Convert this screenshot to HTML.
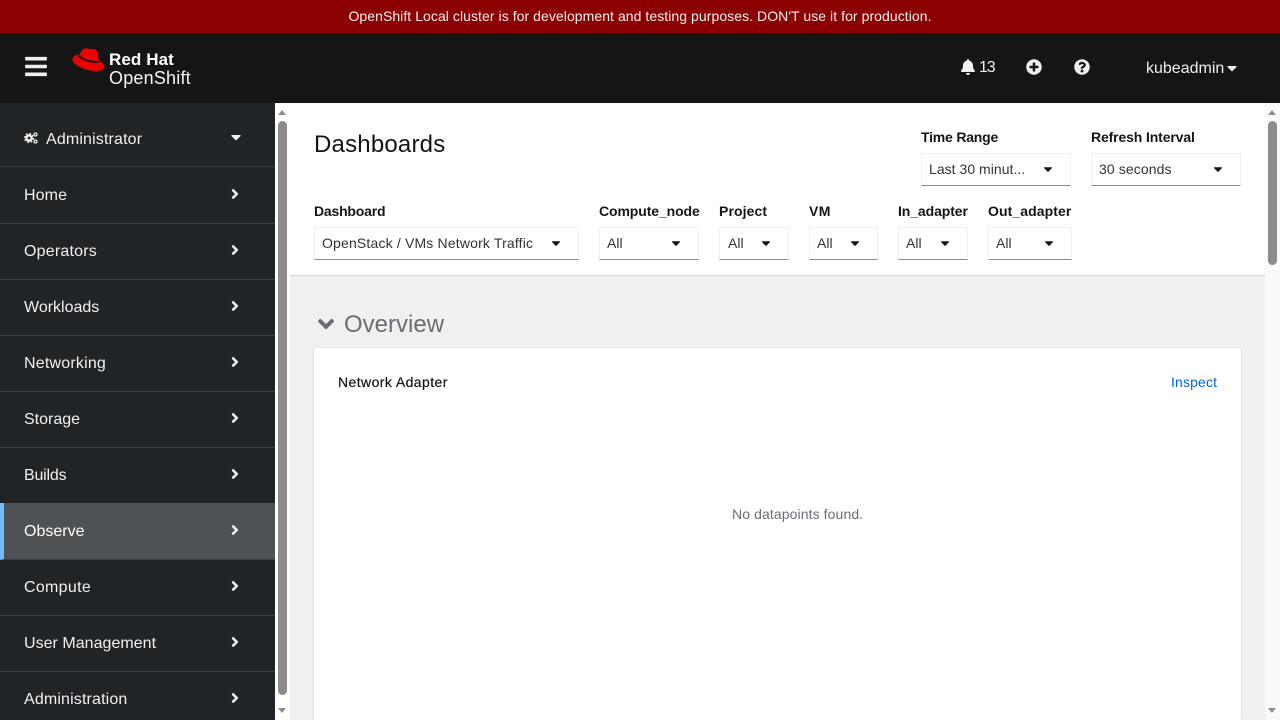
<!DOCTYPE html>
<html lang="en"><head><meta charset="utf-8"><title>Dashboards</title>
<style>
*{box-sizing:border-box}
html,body{margin:0;padding:0;width:1280px;height:720px;overflow:hidden;background:#fff;font-family:"Liberation Sans",sans-serif}
.a{position:absolute}
.t{position:absolute;white-space:nowrap;line-height:20px}
.banner{left:0;top:0;width:1280px;height:33px;background:#8b0000;color:#f0f0f0;font-size:14px;line-height:33px;text-align:center;letter-spacing:.06px}
.head{left:0;top:33px;width:1280px;height:70px;background:#151515}
.side{left:0;top:103px;width:275px;height:617px;background:#212427;overflow:hidden}
.nav{position:absolute;left:0;width:275px;height:56px;border-bottom:1px solid #3c3f42;color:#f0f0f0;font-size:16px}
.nav span{position:absolute;left:24px;top:18px;line-height:20px;white-space:nowrap}
.nav svg{position:absolute;left:231px;top:18px;width:8px;height:16px;fill:#f0f0f0}
.nav.on{background:#4f5255;border-left:4px solid #73bcf7}
.nav.on span{left:20px}.nav.on svg{left:227px}
.sb{background:#fff;width:15px}
.th{background:#8c8c8c;width:9px;border-radius:5px}
.lb{font-size:14px;font-weight:700;color:#151515}
.sel{position:absolute;height:33px;background:#fff;border:1px solid #f0f0f0;border-bottom:1px solid #8a8d90;color:#151515;font-size:14px}
.sel b{position:absolute;left:7px;top:5px;font-weight:400;line-height:20px;white-space:nowrap;color:#333}
.sel svg{position:absolute;top:8px;width:10px;height:14px;fill:#151515}
</style></head><body>
<div class="a banner">OpenShift Local cluster is for development and testing purposes. DON'T use it for production.</div>
<div class="a head"></div>
<svg class="a" style="left:25px;top:54px;width:22px;height:25px;fill:#f0f0f0" viewBox="0 0 448 512"><path d="M16 132h416c8.837 0 16-7.163 16-16V76c0-8.837-7.163-16-16-16H16C7.163 60 0 67.163 0 76v40c0 8.837 7.163 16 16 16zm0 160h416c8.837 0 16-7.163 16-16v-40c0-8.837-7.163-16-16-16H16c-8.837 0-16 7.163-16 16v40c0 8.837 7.163 16 16 16zm0 160h416c8.837 0 16-7.163 16-16v-40c0-8.837-7.163-16-16-16H16c-8.837 0-16 7.163-16 16v40c0 8.837 7.163 16 16 16z"/></svg>
<svg class="a" style="left:70px;top:46px;width:36px;height:30px" viewBox="70 46 36 30"><path fill="#e00" d="M78.500 56Q81 52 82 50.500Q84 47.500 88 48.500Q91 49.500 93 49Q96 48.500 97 52L99 61Q88 62 78.500 56Z"/><path fill="#e00" d="M77 54.500Q72 57 72.300 60Q73 64 82 68Q90 71.500 97 71Q104 70.500 104 66.500Q104 63.500 99.500 61Q99 63 96 63Q87 63 77 54.500Z"/><path fill="none" stroke="#151515" stroke-width="2" d="M78.500 56Q87 62.500 98.500 62"/></svg>
<div class="t" style="left:109px;top:50px;color:#fff;font-size:17px;font-weight:700;letter-spacing:.1px">Red Hat</div>
<div class="t" style="left:109px;top:68px;color:#f5f5f5;font-size:18px;letter-spacing:.2px">OpenShift</div>
<svg class="a" style="left:960px;top:59px;width:16px;height:16px;fill:#f0f0f0" viewBox="0 0 448 512"><path d="M224 512c35.320 0 63.970-28.650 63.970-64H160.030c0 35.350 28.650 64 63.970 64zm215.390-149.710c-19.320-20.760-55.470-51.990-55.470-154.290 0-77.700-54.480-139.900-127.940-155.160V32c0-17.670-14.320-32-31.980-32s-31.980 14.330-31.980 32v20.840C118.560 68.100 64.080 130.300 64.080 208c0 102.300-36.150 133.530-55.470 154.290-6 6.450-8.660 14.160-8.610 21.710.11 16.400 12.980 32 32.100 32h383.800c19.120 0 32-15.600 32.100-32 .05-7.550-2.610-15.270-8.610-21.710z"/></svg>
<div class="t" style="left:979px;top:58px;color:#f0f0f0;font-size:16px;letter-spacing:-1.200px">13</div>
<svg class="a" style="left:1026px;top:59px;width:16px;height:16px;fill:#f0f0f0" viewBox="0 0 512 512"><path d="M256 8C119 8 8 119 8 256s111 248 248 248 248-111 248-248S393 8 256 8zm144 276c0 6.600-5.400 12-12 12h-92v92c0 6.600-5.400 12-12 12h-56c-6.600 0-12-5.400-12-12v-92h-92c-6.600 0-12-5.400-12-12v-56c0-6.600 5.400-12 12-12h92v-92c0-6.600 5.400-12 12-12h56c6.600 0 12 5.400 12 12v92h92c6.600 0 12 5.400 12 12v56z"/></svg>
<svg class="a" style="left:1074px;top:59px;width:16px;height:16px;fill:#f0f0f0" viewBox="0 0 512 512"><path d="M504 256c0 136.997-111.043 248-248 248S8 392.997 8 256C8 119.083 119.043 8 256 8s248 111.083 248 248zM262.655 90c-54.497 0-89.255 22.957-116.549 63.758-3.536 5.286-2.353 12.415 2.715 16.258l34.699 26.310c5.205 3.947 12.621 3.008 16.665-2.122 17.864-22.658 30.113-35.797 57.303-35.797 20.429 0 45.698 13.148 45.698 32.958 0 14.976-12.363 22.667-32.534 33.976C247.128 238.528 216 254.941 216 296v4c0 6.627 5.373 12 12 12h56c6.627 0 12-5.373 12-12v-1.333c0-28.462 83.186-29.647 83.186-106.667 0-58.002-60.165-102-116.531-102zM256 338c-25.365 0-46 20.635-46 46 0 25.364 20.635 46 46 46s46-20.636 46-46c0-25.365-20.635-46-46-46z"/></svg>
<div class="t" style="left:1146px;top:59px;color:#f0f0f0;font-size:16px;letter-spacing:0">kubeadmin</div>
<svg class="a" style="left:1227px;top:60px;width:10px;height:16px;fill:#f0f0f0" viewBox="0 0 320 512"><path d="M31.300 192h257.300c17.800 0 26.700 21.500 14.100 34.100L174.100 354.800c-7.800 7.800-20.500 7.800-28.300 0L17.200 226.100C4.600 213.500 13.500 192 31.300 192z"/></svg>

<div class="a side">
<div class="nav" style="top:8px;height:56px;color:#f0f0f0">
<svg style="left:24px;top:21px;width:14px;height:12px;fill:none;stroke:#f0f0f0" viewBox="0 0 14 12"><circle cx="5" cy="6" r="2.600" stroke-width="2.400"/><circle cx="5" cy="6" r="4.300" stroke-width="1.600" stroke-dasharray="1.700 1.700"/><circle cx="11.500" cy="2.500" r="1.500" stroke-width="1.300"/><circle cx="11.500" cy="9.500" r="1.500" stroke-width="1.300"/></svg>
<span style="left:46px;top:19px;letter-spacing:.15px">Administrator</span>
<svg style="left:231px;top:18px;width:10px;height:16px" viewBox="0 0 320 512"><path d="M31.300 192h257.300c17.800 0 26.700 21.500 14.100 34.100L174.100 354.800c-7.800 7.800-20.500 7.800-28.300 0L17.200 226.100C4.600 213.500 13.500 192 31.300 192z"/></svg>
</div>
<div class="nav" style="top:64px;height:57px"><span style="top:19px;letter-spacing:.1px">Home</span><svg style="top:19px" viewBox="0 0 256 512"><path d="M224.300 273l-136 136c-9.400 9.400-24.600 9.400-33.900 0l-22.600-22.600c-9.400-9.400-9.400-24.600 0-33.900l96.400-96.400-96.400-96.400c-9.400-9.400-9.400-24.600 0-33.900L54.300 103c9.400-9.400 24.600-9.400 33.900 0l136 136c9.500 9.400 9.500 24.600.1 34z"/></svg></div>
<div class="nav" style="top:121px"><span style="letter-spacing:.2px">Operators</span><svg viewBox="0 0 256 512"><path d="M224.300 273l-136 136c-9.400 9.400-24.600 9.400-33.900 0l-22.600-22.600c-9.400-9.400-9.400-24.600 0-33.900l96.400-96.400-96.400-96.400c-9.400-9.400-9.400-24.600 0-33.900L54.300 103c9.400-9.400 24.600-9.400 33.900 0l136 136c9.500 9.400 9.500 24.600.1 34z"/></svg></div>
<div class="nav" style="top:177px"><span style="letter-spacing:0">Workloads</span><svg viewBox="0 0 256 512"><path d="M224.300 273l-136 136c-9.400 9.400-24.600 9.400-33.900 0l-22.600-22.600c-9.400-9.400-9.400-24.600 0-33.900l96.400-96.400-96.400-96.400c-9.400-9.400-9.400-24.600 0-33.900L54.300 103c9.400-9.400 24.600-9.400 33.900 0l136 136c9.500 9.400 9.500 24.600.1 34z"/></svg></div>
<div class="nav" style="top:233px"><span style="letter-spacing:.2px">Networking</span><svg viewBox="0 0 256 512"><path d="M224.300 273l-136 136c-9.400 9.400-24.600 9.400-33.900 0l-22.600-22.600c-9.400-9.400-9.400-24.600 0-33.900l96.400-96.400-96.400-96.400c-9.400-9.400-9.400-24.600 0-33.900L54.300 103c9.400-9.400 24.600-9.400 33.900 0l136 136c9.500 9.400 9.500 24.600.1 34z"/></svg></div>
<div class="nav" style="top:289px"><span style="letter-spacing:0">Storage</span><svg viewBox="0 0 256 512"><path d="M224.300 273l-136 136c-9.400 9.400-24.600 9.400-33.900 0l-22.600-22.600c-9.400-9.400-9.400-24.600 0-33.900l96.400-96.400-96.400-96.400c-9.400-9.400-9.400-24.600 0-33.900L54.300 103c9.400-9.400 24.600-9.400 33.900 0l136 136c9.500 9.400 9.500 24.600.1 34z"/></svg></div>
<div class="nav" style="top:345px"><span style="letter-spacing:-.2px">Builds</span><svg viewBox="0 0 256 512"><path d="M224.300 273l-136 136c-9.400 9.400-24.600 9.400-33.900 0l-22.600-22.600c-9.400-9.400-9.400-24.600 0-33.900l96.400-96.400-96.400-96.400c-9.400-9.400-9.400-24.600 0-33.900L54.300 103c9.400-9.400 24.600-9.400 33.900 0l136 136c9.500 9.400 9.500 24.600.1 34z"/></svg></div>
<div class="nav on" style="top:400px;height:57px"><span style="top:19px;letter-spacing:0;color:#fff">Observe</span><svg style="top:19px" viewBox="0 0 256 512"><path d="M224.300 273l-136 136c-9.400 9.400-24.600 9.400-33.900 0l-22.600-22.600c-9.400-9.400-9.400-24.600 0-33.900l96.400-96.400-96.400-96.400c-9.400-9.400-9.400-24.600 0-33.900L54.300 103c9.400-9.400 24.600-9.400 33.900 0l136 136c9.500 9.400 9.500 24.600.1 34z"/></svg></div>
<div class="nav" style="top:457px;height:56px"><span style="letter-spacing:.3px">Compute</span><svg viewBox="0 0 256 512"><path d="M224.300 273l-136 136c-9.400 9.400-24.600 9.400-33.900 0l-22.600-22.600c-9.400-9.400-9.400-24.600 0-33.900l96.400-96.400-96.400-96.400c-9.400-9.400-9.400-24.600 0-33.900L54.300 103c9.400-9.400 24.600-9.400 33.900 0l136 136c9.500 9.400 9.500 24.600.1 34z"/></svg></div>
<div class="nav" style="top:513px"><span style="letter-spacing:.03px">User Management</span><svg viewBox="0 0 256 512"><path d="M224.300 273l-136 136c-9.400 9.400-24.600 9.400-33.900 0l-22.600-22.600c-9.400-9.400-9.400-24.600 0-33.900l96.400-96.400-96.400-96.400c-9.400-9.400-9.400-24.600 0-33.900L54.300 103c9.400-9.400 24.600-9.400 33.900 0l136 136c9.500 9.400 9.500 24.600.1 34z"/></svg></div>
<div class="nav" style="top:569px"><span style="letter-spacing:.15px">Administration</span><svg viewBox="0 0 256 512"><path d="M224.300 273l-136 136c-9.400 9.400-24.600 9.400-33.900 0l-22.600-22.600c-9.400-9.400-9.400-24.600 0-33.900l96.400-96.400-96.400-96.400c-9.400-9.400-9.400-24.600 0-33.900L54.300 103c9.400-9.400 24.600-9.400 33.900 0l136 136c9.500 9.400 9.500 24.600.1 34z"/></svg></div>
</div>

<div class="a sb" style="left:275px;top:103px;height:617px"></div>
<div class="a th" style="left:278px;top:121px;height:574px"></div>
<div class="a" style="left:278px;top:110px;border-left:4.500px solid transparent;border-right:4.500px solid transparent;border-bottom:5px solid #8c8c8c"></div>
<div class="a" style="left:278px;top:708px;border-left:4.500px solid transparent;border-right:4.500px solid transparent;border-top:5px solid #8c8c8c"></div>

<div class="a" style="left:290px;top:276px;width:975px;height:444px;background:#f0f0f0"></div>
<div class="a" style="left:290px;top:275px;width:975px;height:1px;background:#d2d2d2"></div>

<div class="a sb" style="left:1265px;top:103px;height:617px;background:#fafafa"></div>
<div class="a th" style="left:1268px;top:121px;height:144px"></div>
<div class="a" style="left:1268px;top:110px;border-left:4.500px solid transparent;border-right:4.500px solid transparent;border-bottom:5px solid #8c8c8c"></div>
<div class="a" style="left:1268px;top:708px;border-left:4.500px solid transparent;border-right:4.500px solid transparent;border-top:5px solid #8c8c8c"></div>

<div class="t" style="left:314px;top:130px;line-height:30px;font-size:24px;color:#151515;letter-spacing:.2px">Dashboards</div>

<div class="t lb" style="left:921px;top:127px;letter-spacing:-.2px">Time Range</div>
<div class="sel" style="left:921px;top:153px;width:150px"><b style="letter-spacing:.03px">Last 30 minut...</b><svg style="left:121px" viewBox="0 0 320 512"><path d="M31.300 192h257.300c17.800 0 26.700 21.500 14.100 34.100L174.100 354.800c-7.800 7.800-20.500 7.800-28.300 0L17.200 226.100C4.600 213.500 13.500 192 31.300 192z"/></svg></div>
<div class="t lb" style="left:1091px;top:127px;letter-spacing:-.13px">Refresh Interval</div>
<div class="sel" style="left:1091px;top:153px;width:150px"><b style="letter-spacing:.1px">30 seconds</b><svg style="left:121px" viewBox="0 0 320 512"><path d="M31.300 192h257.300c17.800 0 26.700 21.500 14.100 34.100L174.100 354.800c-7.800 7.800-20.500 7.800-28.300 0L17.200 226.100C4.600 213.500 13.500 192 31.300 192z"/></svg></div>

<div class="t lb" style="left:314px;top:201px;letter-spacing:-.2px">Dashboard</div>
<div class="sel" style="left:314px;top:227px;width:265px"><b style="letter-spacing:.17px">OpenStack / VMs Network Traffic</b><svg style="left:236px" viewBox="0 0 320 512"><path d="M31.300 192h257.300c17.800 0 26.700 21.500 14.100 34.100L174.100 354.800c-7.800 7.800-20.500 7.800-28.300 0L17.200 226.100C4.600 213.500 13.500 192 31.300 192z"/></svg></div>
<div class="t lb" style="left:599px;top:201px;letter-spacing:-.1px">Compute_node</div>
<div class="sel" style="left:599px;top:227px;width:100px"><b>All</b><svg style="left:71px" viewBox="0 0 320 512"><path d="M31.300 192h257.300c17.800 0 26.700 21.500 14.100 34.100L174.100 354.800c-7.800 7.800-20.500 7.800-28.300 0L17.200 226.100C4.600 213.500 13.500 192 31.300 192z"/></svg></div>
<div class="t lb" style="left:719px;top:201px;letter-spacing:.1px">Project</div>
<div class="sel" style="left:719px;top:227px;width:70px"><b style="left:8px">All</b><svg style="left:41px" viewBox="0 0 320 512"><path d="M31.300 192h257.300c17.800 0 26.700 21.500 14.100 34.100L174.100 354.800c-7.800 7.800-20.500 7.800-28.300 0L17.200 226.100C4.600 213.500 13.500 192 31.300 192z"/></svg></div>
<div class="t lb" style="left:809px;top:201px;letter-spacing:.4px">VM</div>
<div class="sel" style="left:809px;top:227px;width:69px"><b>All</b><svg style="left:40px" viewBox="0 0 320 512"><path d="M31.300 192h257.300c17.800 0 26.700 21.500 14.100 34.100L174.100 354.800c-7.800 7.800-20.500 7.800-28.300 0L17.200 226.100C4.600 213.500 13.500 192 31.300 192z"/></svg></div>
<div class="t lb" style="left:898px;top:201px;letter-spacing:-.1px">In_adapter</div>
<div class="sel" style="left:898px;top:227px;width:70px"><b>All</b><svg style="left:41px" viewBox="0 0 320 512"><path d="M31.300 192h257.300c17.800 0 26.700 21.500 14.100 34.100L174.100 354.800c-7.800 7.800-20.500 7.800-28.300 0L17.200 226.100C4.600 213.500 13.500 192 31.300 192z"/></svg></div>
<div class="t lb" style="left:988px;top:201px;letter-spacing:.08px">Out_adapter</div>
<div class="sel" style="left:988px;top:227px;width:84px"><b>All</b><svg style="left:55px" viewBox="0 0 320 512"><path d="M31.300 192h257.300c17.800 0 26.700 21.500 14.100 34.100L174.100 354.800c-7.800 7.800-20.500 7.800-28.300 0L17.200 226.100C4.600 213.500 13.500 192 31.300 192z"/></svg></div>

<svg class="a" style="left:318px;top:311px;width:16px;height:26px;fill:#6a6e73" viewBox="0 0 320 512"><path d="M143 352.300L7 216.300c-9.400-9.400-9.400-24.600 0-33.900l22.600-22.600c9.400-9.400 24.600-9.400 33.900 0l96.400 96.400 96.400-96.400c9.400-9.400 24.600-9.400 33.900 0l22.600 22.600c9.400 9.400 9.400 24.600 0 33.900l-136 136c-9.200 9.400-24.400 9.400-33.800 0z"/></svg>
<div class="t" style="left:344px;top:310px;line-height:30px;font-size:24px;color:#6a6e73;letter-spacing:0">Overview</div>
<div class="a" style="left:314px;top:348px;width:927px;height:372px;background:#fff;box-shadow:0 1px 2px rgba(3,3,3,.12),0 0 2px rgba(3,3,3,.06)"></div>
<div class="t" style="left:338px;top:372px;font-size:14px;color:#151515;letter-spacing:.42px;-webkit-text-stroke:.2px #151515">Network Adapter</div>
<div class="t" style="left:1171px;top:372px;font-size:14px;color:#06c;letter-spacing:.15px">Inspect</div>
<div class="t" style="left:732px;top:504px;font-size:14px;color:#6a6e73;letter-spacing:.1px">No datapoints found.</div>
</body></html>
